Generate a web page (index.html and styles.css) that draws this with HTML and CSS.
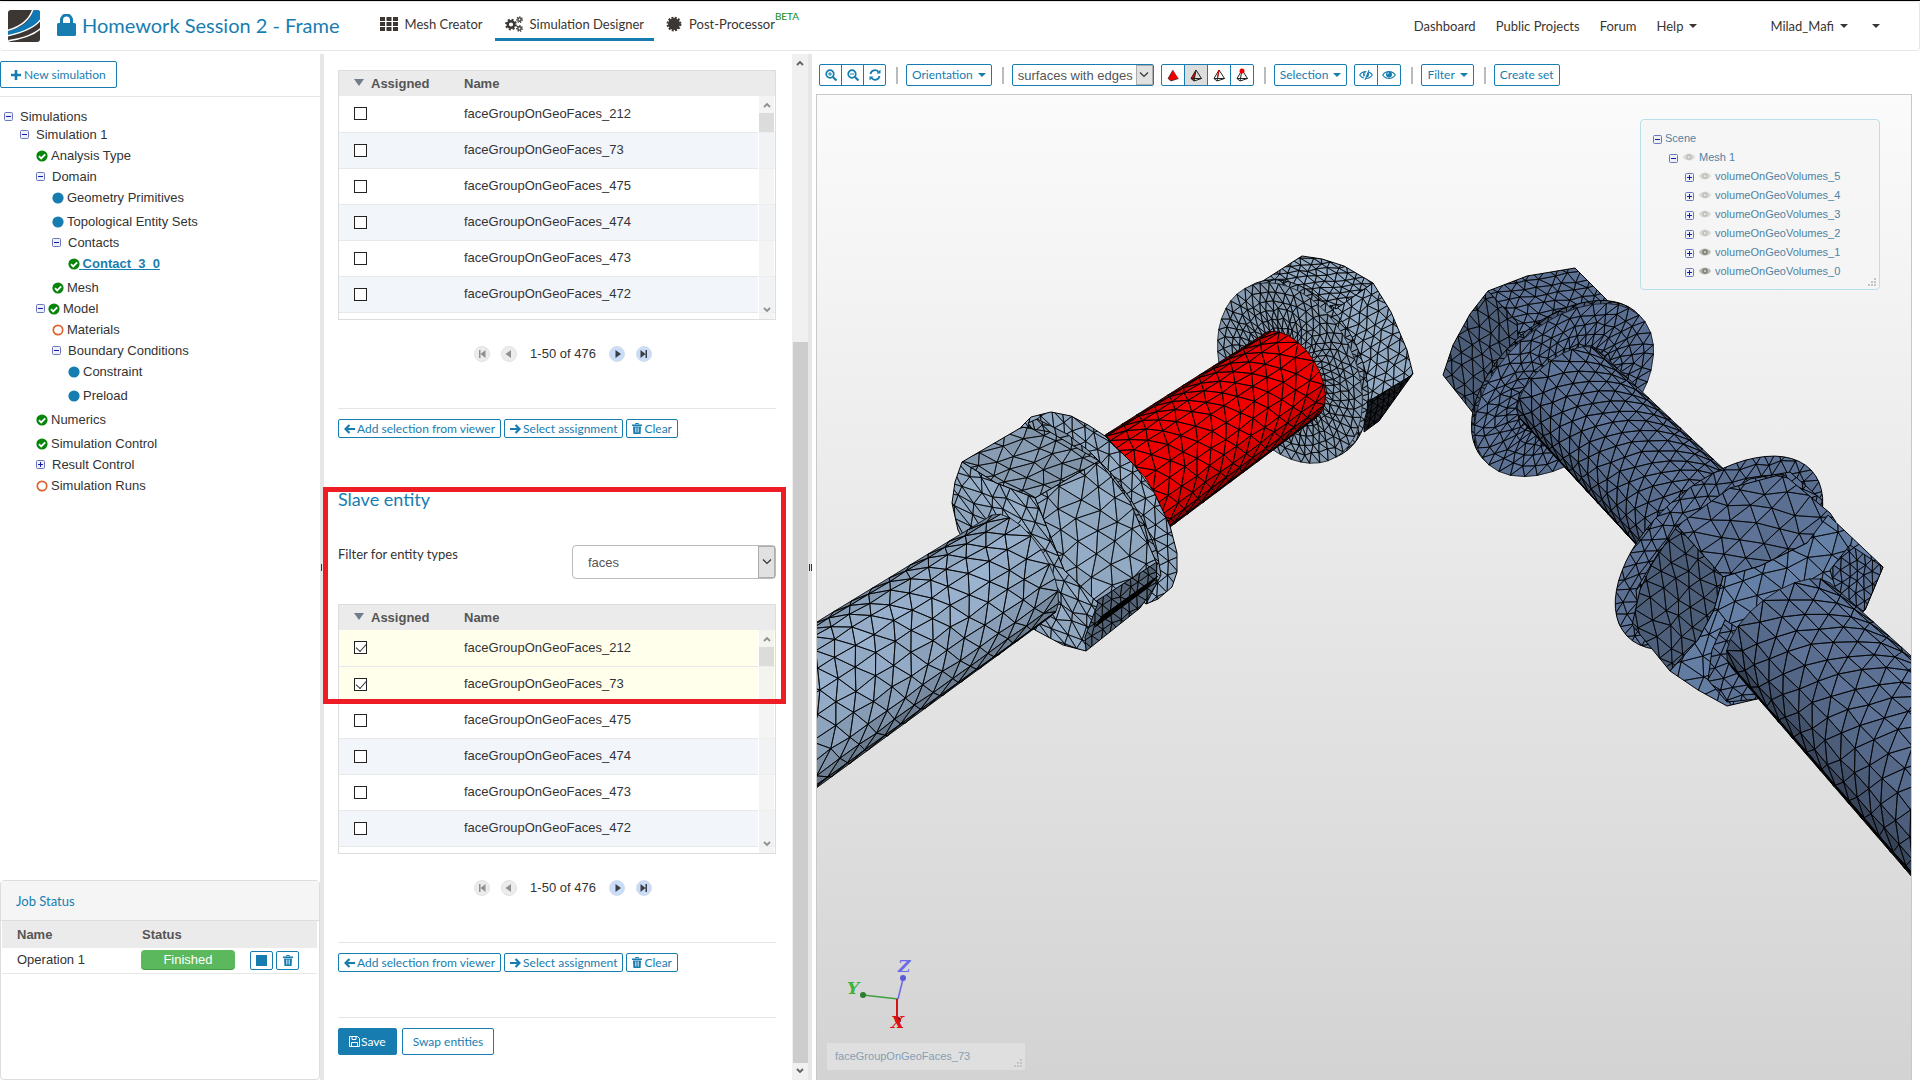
FILE: index.html
```html
<!DOCTYPE html>
<html lang="en">
<head>
<meta charset="utf-8">
<title>Homework Session 2 - Frame</title>
<link rel="stylesheet" href="styles.css">
</head>
<body>
<svg class="defs" aria-hidden="true">
  <symbol id="i-check" viewBox="0 0 12 12"><circle cx="6" cy="6" r="5.6" fill="#07850b"/><path d="M3 6.2l2.2 2.2L9.2 4.4" fill="none" stroke="#fff" stroke-width="1.8"/></symbol>
  <symbol id="i-dot" viewBox="0 0 12 12"><circle cx="6" cy="6" r="5.6" fill="#177db1"/></symbol>
  <symbol id="i-ring" viewBox="0 0 12 12"><circle cx="6" cy="6" r="4.7" fill="#fff" stroke="#e0622f" stroke-width="1.7"/></symbol>
  <symbol id="i-minus" viewBox="0 0 9 9"><rect x=".5" y=".5" width="8" height="8" rx="1" fill="#eef0f8" stroke="#6a78b8"/><path d="M2 4.5h5" stroke="#1a1ab0"/></symbol>
  <symbol id="i-plus" viewBox="0 0 9 9"><rect x=".5" y=".5" width="8" height="8" rx="1" fill="#eef0f8" stroke="#6a78b8"/><path d="M2 4.5h5M4.500 2v5" stroke="#1a1ab0"/></symbol>
  <symbol id="i-eye" viewBox="0 0 14 9"><path d="M0 4.500C3-1 11-1 14 4.500 11 10 3 10 0 4.500z" fill="currentColor" opacity=".55"/><circle cx="7" cy="4.500" r="3.300" fill="currentColor"/><circle cx="7" cy="4.500" r="1" fill="#fff"/></symbol>
  <symbol id="i-view" viewBox="0 0 14 10"><path d="M.7 5C3.500.5 10.500.5 13.300 5 10.500 9.500 3.500 9.500.7 5z" fill="none" stroke="currentColor" stroke-width="1.100"/><circle cx="7" cy="4.500" r="3" fill="currentColor"/><path d="M5.500 4.300a1.500 1.500 0 0 1 1.500-1.500" stroke="#fff" fill="none" stroke-width=".8"/></symbol>
  <symbol id="i-trash" viewBox="0 0 10 11"><path d="M3.500 1.500v-1h3v1" fill="none" stroke="currentColor"/><path d="M0 1.500h10v1.500H0zM1 3.500h8l-.4 7.500H1.400z" fill="currentColor"/><path d="M3.500 4.500v5M5 4.500v5M6.500 4.500v5" stroke="#fff" stroke-width=".6"/></symbol>
  <symbol id="i-left" viewBox="0 0 11 10"><path d="M5.500 1L1.500 5l4 4M1.800 5H11" fill="none" stroke="currentColor" stroke-width="2.200"/></symbol>
  <symbol id="i-right" viewBox="0 0 11 10"><path d="M5.500 1l4 4-4 4M9.200 5H0" fill="none" stroke="currentColor" stroke-width="2.200"/></symbol>
  <symbol id="i-first" viewBox="0 0 16 16"><circle cx="8" cy="8" r="7.500" fill="#ececec" stroke="#e2e2e2"/><path d="M5 4h1.500v8H5zM11.500 4v8l-5-4z" fill="#909090"/></symbol>
  <symbol id="i-prev" viewBox="0 0 16 16"><circle cx="8" cy="8" r="7.500" fill="#ececec" stroke="#e2e2e2"/><path d="M10 4v8L4.500 8z" fill="#909090"/></symbol>
  <symbol id="i-next" viewBox="0 0 16 16"><circle cx="8" cy="8" r="7.500" fill="#c9dcf8" stroke="#d5dde8"/><path d="M6.500 4v8L12 8z" fill="#3b3f45"/></symbol>
  <symbol id="i-last" viewBox="0 0 16 16"><circle cx="8" cy="8" r="7.500" fill="#c9dcf8" stroke="#d5dde8"/><path d="M4.500 4v8l5-4zM9.500 4H11v8H9.500z" fill="#3b3f45"/></symbol>
  <symbol id="i-up" viewBox="0 0 8 6"><path d="M1 5l3-3 3 3" fill="none" stroke="currentColor" stroke-width="1.800"/></symbol>
  <symbol id="i-down" viewBox="0 0 8 6"><path d="M1 1l3 3 3-3" fill="none" stroke="currentColor" stroke-width="1.800"/></symbol>
  <symbol id="i-grip" viewBox="0 0 8 8"><path d="M6 0h2v2H6zM3 3h2v2H3zM6 3h2v2H6zM0 6h2v2H0zM3 6h2v2H3zM6 6h2v2H6z" fill="#c4c4c4"/></symbol>
  <symbol id="i-tet" viewBox="0 0 14 14"><path d="M7 2L2 10.500 5 13l7.500-2.500zM7 2L5 13M2 10.500h10.500" fill="none" stroke="#222" stroke-width="1"/></symbol>
</svg>

<header class="top">
  <a class="logo" href="#" aria-label="Home">
    <svg width="32" height="32" viewBox="0 0 32 32"><defs><clipPath id="lg"><rect width="32" height="32" rx="3"/></clipPath></defs><g clip-path="url(#lg)"><rect width="32" height="32" fill="#3d3733"/><path d="M32 0H25Q22 16 0 21v5Q27 20 32 9z" fill="#1078b4"/><g fill="none" stroke="#fff" stroke-width="1.500"><path d="M25-1Q20 15-1 20.500M33 9Q26 20-1 26M33 18Q24 27-1 31"/></g></g></svg>
  </a>
  <h1 class="title"><svg width="19" height="22" viewBox="0 0 19 22"><path d="M4.500 10V6a5 5 0 0 1 10 0v4" fill="none" stroke="#177db1" stroke-width="3"/><rect y="9" width="19" height="13" rx="1.500" fill="#177db1"/></svg>Homework Session 2 - Frame</h1>
  <nav class="tabs">
    <a href="#"><svg width="18" height="14" viewBox="0 0 18 14" fill="#3d3733"><path d="M0 0h5v4H0zM6.500 0h5v4h-5zM13 0h5v4h-5zM0 5h5v4H0zM6.500 5h5v4h-5zM13 5h5v4h-5zM0 10h5v4H0zM6.500 10h5v4h-5zM13 10h5v4h-5z"/></svg>Mesh Creator</a>
    <a href="#" class="on"><svg width="18" height="16" viewBox="0 0 18 16" fill="none" stroke="#3d3733"><circle cx="6" cy="8.500" r="3.300" stroke-width="2.400"/><circle cx="6" cy="8.500" r="5" stroke-width="1.800" stroke-dasharray="2 1.930"/><circle cx="14.500" cy="3.600" r="1.700" stroke-width="1.400"/><circle cx="14.500" cy="3.600" r="2.800" stroke-width="1.200" stroke-dasharray="1.300 1.220"/><circle cx="14.500" cy="12.400" r="1.700" stroke-width="1.400"/><circle cx="14.500" cy="12.400" r="2.800" stroke-width="1.200" stroke-dasharray="1.300 1.220"/></svg>Simulation Designer</a>
    <a href="#"><svg width="16" height="16" viewBox="0 0 16 16"><circle cx="8" cy="8" r="6" fill="#3d3733"/><circle cx="8" cy="8" r="6.400" fill="none" stroke="#3d3733" stroke-width="2" stroke-dasharray="2 1.350"/></svg>Post-Processor<sup>BETA</sup></a>
  </nav>
  <nav class="links">
    <a href="#">Dashboard</a><a href="#">Public Projects</a><a href="#">Forum</a><a href="#">Help <i class="caret"></i></a>
    <a href="#" class="user">Milad_Mafi <i class="caret"></i></a><a href="#" aria-label="More"><i class="caret"></i></a>
  </nav>
</header>

<main class="main">
  <aside class="side">
    <div class="side-head"><button class="btn big new"><svg width="10" height="10" viewBox="0 0 10 10"><path d="M5 0v10M0 5h10" stroke="#177db1" stroke-width="2.600"/></svg>New simulation</button></div>
    <ul class="tree">
      <li class="l0 tight"><svg class="tg"><use href="#i-minus"/></svg><span>Simulations</span></li>
      <li class="l1"><svg class="tg"><use href="#i-minus"/></svg><span>Simulation 1</span></li>
      <li class="l2"><svg class="st"><use href="#i-check"/></svg><span>Analysis Type</span></li>
      <li class="l2"><svg class="tg"><use href="#i-minus"/></svg><span>Domain</span></li>
      <li class="l3"><svg class="st"><use href="#i-dot"/></svg><span>Geometry Primitives</span></li>
      <li class="l3 gap"><svg class="st"><use href="#i-dot"/></svg><span>Topological Entity Sets</span></li>
      <li class="l3"><svg class="tg"><use href="#i-minus"/></svg><span>Contacts</span></li>
      <li class="l4"><svg class="st"><use href="#i-check"/></svg><a href="#">&nbsp;Contact_3_0</a></li>
      <li class="l3 gap"><svg class="st"><use href="#i-check"/></svg><span>Mesh</span></li>
      <li class="l2"><svg class="tg near"><use href="#i-minus"/></svg><svg class="st"><use href="#i-check"/></svg><span>Model</span></li>
      <li class="l3"><svg class="st"><use href="#i-ring"/></svg><span>Materials</span></li>
      <li class="l3"><svg class="tg"><use href="#i-minus"/></svg><span>Boundary Conditions</span></li>
      <li class="l4"><svg class="st"><use href="#i-dot"/></svg><span>Constraint</span></li>
      <li class="l4 gap"><svg class="st"><use href="#i-dot"/></svg><span>Preload</span></li>
      <li class="l2 gap"><svg class="st"><use href="#i-check"/></svg><span>Numerics</span></li>
      <li class="l2 gap"><svg class="st"><use href="#i-check"/></svg><span>Simulation Control</span></li>
      <li class="l2"><svg class="tg"><use href="#i-plus"/></svg><span>Result Control</span></li>
      <li class="l2"><svg class="st"><use href="#i-ring"/></svg><span>Simulation Runs</span></li>
    </ul>
    <section class="jobs">
      <h2>Job Status</h2>
      <table>
        <thead><tr><th class="jn">Name</th><th class="js">Status</th><th></th></tr></thead>
        <tbody><tr><td>Operation 1</td><td><span class="pill">Finished</span></td><td><div class="acts"><button class="btn sm sq" aria-label="Stop"><svg width="11" height="11"><rect width="11" height="11" fill="#177db1"/></svg></button><button class="btn sm sq" aria-label="Delete"><svg width="10" height="11"><use href="#i-trash"/></svg></button></div></td></tr></tbody>
      </table>
    </section>
  </aside>
  <div class="split"><i></i></div>

  <section class="form">
    <div class="form-body">
      <div class="tbl">
        <table>
          <thead><tr><th class="ca"><i class="sort"></i>Assigned</th><th>Name</th></tr></thead>
          <tbody>
            <tr><td><input type="checkbox" id="m212"></td><td><label for="m212">faceGroupOnGeoFaces_212</label></td></tr>
            <tr><td><input type="checkbox" id="m73"></td><td><label for="m73">faceGroupOnGeoFaces_73</label></td></tr>
            <tr><td><input type="checkbox" id="m475"></td><td><label for="m475">faceGroupOnGeoFaces_475</label></td></tr>
            <tr><td><input type="checkbox" id="m474"></td><td><label for="m474">faceGroupOnGeoFaces_474</label></td></tr>
            <tr><td><input type="checkbox" id="m473"></td><td><label for="m473">faceGroupOnGeoFaces_473</label></td></tr>
            <tr><td><input type="checkbox" id="m472"></td><td><label for="m472">faceGroupOnGeoFaces_472</label></td></tr>
          </tbody>
        </table>
        <div class="sb in"><svg width="8" height="6"><use href="#i-up"/></svg><i class="thumb"></i><svg class="end" width="8" height="6"><use href="#i-down"/></svg></div>
      </div>
      <div class="pager"><button aria-label="First"><svg><use href="#i-first"/></svg></button><button aria-label="Previous"><svg><use href="#i-prev"/></svg></button><span>1-50 of 476</span><button aria-label="Next"><svg><use href="#i-next"/></svg></button><button aria-label="Last"><svg><use href="#i-last"/></svg></button></div>
      <div class="row ruled"><button class="btn sm"><svg width="11" height="10"><use href="#i-left"/></svg>Add selection from viewer</button><button class="btn sm"><svg width="11" height="10"><use href="#i-right"/></svg>Select assignment</button><button class="btn sm"><svg width="10" height="11"><use href="#i-trash"/></svg>Clear</button></div>

      <div class="slave">
        <h2>Slave entity</h2>
        <div class="filter"><label for="etype">Filter for entity types</label><div class="sel"><select id="etype"><option>faces</option></select><span><svg width="10" height="6" viewBox="0 0 10 6"><path d="M1 .5l4 4 4-4" fill="none" stroke="#333" stroke-width="1.200"/></svg></span></div></div>
        <div class="tbl">
          <table>
            <thead><tr><th class="ca"><i class="sort"></i>Assigned</th><th>Name</th></tr></thead>
            <tbody>
              <tr class="hit"><td><input type="checkbox" id="s212" checked></td><td><label for="s212">faceGroupOnGeoFaces_212</label></td></tr>
              <tr class="hit"><td><input type="checkbox" id="s73" checked></td><td><label for="s73">faceGroupOnGeoFaces_73</label></td></tr>
              <tr><td><input type="checkbox" id="s475"></td><td><label for="s475">faceGroupOnGeoFaces_475</label></td></tr>
              <tr><td><input type="checkbox" id="s474"></td><td><label for="s474">faceGroupOnGeoFaces_474</label></td></tr>
              <tr><td><input type="checkbox" id="s473"></td><td><label for="s473">faceGroupOnGeoFaces_473</label></td></tr>
              <tr><td><input type="checkbox" id="s472"></td><td><label for="s472">faceGroupOnGeoFaces_472</label></td></tr>
            </tbody>
          </table>
          <div class="sb in"><svg width="8" height="6"><use href="#i-up"/></svg><i class="thumb"></i><svg class="end" width="8" height="6"><use href="#i-down"/></svg></div>
        </div>
        <div class="mark"></div>
      </div>
      <div class="pager"><button aria-label="First"><svg><use href="#i-first"/></svg></button><button aria-label="Previous"><svg><use href="#i-prev"/></svg></button><span>1-50 of 476</span><button aria-label="Next"><svg><use href="#i-next"/></svg></button><button aria-label="Last"><svg><use href="#i-last"/></svg></button></div>
      <div class="row ruled"><button class="btn sm"><svg width="11" height="10"><use href="#i-left"/></svg>Add selection from viewer</button><button class="btn sm"><svg width="11" height="10"><use href="#i-right"/></svg>Select assignment</button><button class="btn sm"><svg width="10" height="11"><use href="#i-trash"/></svg>Clear</button></div>
      <div class="row ruled last"><button class="btn big save"><svg width="11" height="11" viewBox="0 0 11 11" fill="none" stroke="#fff"><path d="M.5.5h8l2 2v8H.5zM3 .5v3h4v-3M2.500 10.500v-4h6v4"/></svg>Save</button><button class="btn big">Swap entities</button></div>
    </div>
    <div class="sb out"><svg width="8" height="6"><use href="#i-up"/></svg><i class="thumb"></i><svg class="end" width="8" height="6"><use href="#i-down"/></svg></div>
  </section>
  <div class="split"><i></i></div>

  <section class="viewer">
    <div class="bar">
      <div class="grp"><button class="btn" aria-label="Zoom in"><svg width="12" height="12" viewBox="0 0 12 12" fill="none" stroke="#177db1"><circle cx="5" cy="5" r="3.800" stroke-width="1.700"/><path d="M3 5h4M5 3v4"/><path d="M8 8l3.500 3.500" stroke-width="2.200"/></svg></button><button class="btn" aria-label="Zoom out"><svg width="12" height="12" viewBox="0 0 12 12" fill="none" stroke="#177db1"><circle cx="5" cy="5" r="3.800" stroke-width="1.700"/><path d="M3 5h4"/><path d="M8 8l3.500 3.500" stroke-width="2.200"/></svg></button><button class="btn" aria-label="Reset"><svg width="12" height="12" viewBox="0 0 12 12" fill="none" stroke="#177db1" stroke-width="1.800"><path d="M1.500 5A4.500 4.500 0 0 1 9.500 3M10.500 7A4.500 4.500 0 0 1 2.500 9"/><path d="M11.500.5v4h-4zM.5 11.500v-4h4z" fill="#177db1" stroke="none"/></svg></button></div>
      <i class="sep"></i><button class="btn dd">Orientation<i class="caret"></i></button>
      <i class="sep"></i><div class="sel mini"><select aria-label="Render mode"><option>surfaces with edges</option></select><span><svg width="10" height="6" viewBox="0 0 10 6"><path d="M1 .5l4 4 4-4" fill="none" stroke="#333" stroke-width="1.200"/></svg></span></div>
      <div class="grp tets"><button class="btn" aria-label="Volumes"><svg width="14" height="14"><path d="M7 2L2 10.500 5 13l7.500-2.500z" fill="#e00"/><path d="M7 2L2 10.500 5 13l7.500-2.500" fill="none" stroke="#222" stroke-width=".7"/></svg></button><button class="btn act" aria-label="Faces"><svg width="14" height="14"><path d="M7 2L5 13l-3-2.500z" fill="#e00"/><use href="#i-tet"/></svg></button><button class="btn" aria-label="Edges"><svg width="14" height="14"><use href="#i-tet"/><path d="M7 2L5.500 10" stroke="#e00"/></svg></button><button class="btn" aria-label="Nodes"><svg width="14" height="14"><use href="#i-tet"/><circle cx="7" cy="3" r="2.500" fill="#e00"/></svg></button></div>
      <i class="sep"></i><button class="btn dd">Selection<i class="caret"></i></button>
      <div class="grp eyes"><button class="btn" aria-label="Hide"><svg width="14" height="10"><use href="#i-view"/><path d="M9 0L5 10" stroke="#fff" stroke-width="2"/><path d="M10 0L6 10" stroke="#177db1"/></svg></button><button class="btn" aria-label="Show"><svg width="14" height="10"><use href="#i-view"/></svg></button></div>
      <i class="sep"></i><button class="btn dd">Filter<i class="caret"></i></button>
      <i class="sep"></i><button class="btn">Create set</button>
    </div>
    <div class="canvas">
      <svg id="scene" viewBox="817 95 1094 985" preserveAspectRatio="xMinYMin slice" role="img" aria-label="Meshed bolts"></svg>
      <div class="scene-tree">
        <ul>
          <li class="s0"><svg class="tg"><use href="#i-minus"/></svg>Scene</li>
          <li class="s1"><svg class="tg"><use href="#i-minus"/></svg><svg class="eye"><use href="#i-eye"/></svg>Mesh 1</li>
          <li class="s2"><svg class="tg"><use href="#i-plus"/></svg><svg class="eye"><use href="#i-eye"/></svg>volumeOnGeoVolumes_5</li>
          <li class="s2"><svg class="tg"><use href="#i-plus"/></svg><svg class="eye"><use href="#i-eye"/></svg>volumeOnGeoVolumes_4</li>
          <li class="s2"><svg class="tg"><use href="#i-plus"/></svg><svg class="eye"><use href="#i-eye"/></svg>volumeOnGeoVolumes_3</li>
          <li class="s2"><svg class="tg"><use href="#i-plus"/></svg><svg class="eye"><use href="#i-eye"/></svg>volumeOnGeoVolumes_2</li>
          <li class="s2"><svg class="tg"><use href="#i-plus"/></svg><svg class="eye vis"><use href="#i-eye"/></svg>volumeOnGeoVolumes_1</li>
          <li class="s2"><svg class="tg"><use href="#i-plus"/></svg><svg class="eye vis"><use href="#i-eye"/></svg>volumeOnGeoVolumes_0</li>
        </ul>
        <svg class="grip" width="8" height="8"><use href="#i-grip"/></svg>
      </div>
      <div class="hint">faceGroupOnGeoFaces_73<svg class="grip" width="8" height="8"><use href="#i-grip"/></svg></div>
    </div>
  </section>
</main>
<script src="scene.js"></script>
</body>
</html>
```

FILE: styles.css
```css
* { box-sizing: border-box; }
body { margin: 0; height: 100vh; display: flex; flex-direction: column; overflow: hidden; border-top: 1px solid #000; background: #fff; color: #333; font: 13px/20px "Liberation Sans", Arial, sans-serif; }
svg { display: block; flex: none; }
ul { list-style: none; margin: 0; padding: 0; }
h1, h2 { margin: 0; font-weight: 400; color: #177db1; font-family: Lato, sans-serif; }
a { color: inherit; text-decoration: none; }
.defs { position: absolute; width: 0; height: 0; }

.top { display: flex; align-items: center; height: 50px; padding: 0 39px 0 8px; border: 1px solid #e7e7e7; border-left: 0; border-radius: 4px; font-family: Lato, sans-serif; font-size: 13px; color: #3a3531; flex: none; }
.title { display: flex; align-items: center; gap: 6px; margin: 0 0 2px 17px; font-size: 20px; line-height: 24px; white-space: nowrap; }
.tabs { display: flex; gap: 2px; margin-left: 30px; height: 40px; }
.tabs a { display: flex; align-items: center; gap: 7px; padding: 2px 10px 0; border-bottom: 3px solid transparent; height: 34px; margin-top: 1px; }
.tabs a.on { border-color: #177db1; }
.tabs sup { font-size: 10px; line-height: 10px; color: #118a1b; margin: -15px 0 0 -7px; }
.links { display: flex; align-items: center; gap: 20px; margin: 0 0 1px auto; }
.links a { display: flex; align-items: center; gap: 6px; }
.links .user { margin: 0 4px 0 53px; }
.caret { display: block; border: 4px solid transparent; border-top-color: currentColor; border-bottom: 0; }

.main { display: flex; flex: 1; min-height: 0; padding-top: 3px; }
.split { flex: none; width: 4px; background: #e6e6e6; display: flex; align-items: center; justify-content: center; }
.split i { width: 3px; height: 7px; border: solid #333; border-width: 0 1px; }

.btn { display: inline-flex; align-items: center; justify-content: center; gap: 3px; height: 22px; padding: 0 5px; border: 1px solid #177db1; border-radius: 2px; background: #fff; color: #177db1; font: 12px/16px Lato, sans-serif; white-space: nowrap; }
.btn.big { height: 27px; padding: 0 10px; }
.btn.big.save { gap: 1px; }
.btn.sm { height: 19px; padding: 0 5px; gap: 2px; }
.save { background: #177db1; color: #fff; }

.side { width: 320px; flex: none; display: flex; flex-direction: column; }
.side-head { height: 43px; padding-top: 7px; border-bottom: 1px solid #e5e5e5; }
.tree { padding-top: 12px; flex: 1; }
.tree li { display: flex; align-items: center; height: 21px; }
.tree li.tight { height: 15px; }
.tree li.gap { margin-top: 3px; }
.tree a { color: #177db1; font-weight: 700; text-decoration: underline; margin-left: -4px; }
.tg { width: 9px; height: 9px; margin-right: 7px; }
.tg.near { margin-right: 3px; }
.st { width: 12px; height: 12px; margin-right: 3px; }
.l0 { padding-left: 4px; }
.l1 { padding-left: 20px; }
.l2 { padding-left: 36px; }
.l3 { padding-left: 52px; }
.l4 { padding-left: 68px; }

.jobs { height: 200px; border: 1px solid #ddd; border-radius: 4px; }
.jobs h2 { height: 40px; padding: 0 15px; line-height: 40px; font-size: 13px; background: #f5f5f5; border-bottom: 1px solid #ddd; }
.jobs table { width: 315px; border-collapse: collapse; table-layout: fixed; margin-left: 1px; }
.jobs th { height: 27px; background: #ebebeb; color: #555; text-align: left; padding: 0 0 0 15px; }
.jobs .jn { width: 124px; }
.jobs .js { width: 109px; }
.jobs td { height: 25px; padding: 0 0 0 15px; border-bottom: 1px solid #e8e8e8; }
.jobs th:nth-child(2) { padding-left: 16px; }
.pill { display: block; width: 94px; height: 20px; line-height: 19px; border-radius: 4px; background: #5cb85c; border-bottom: 1px solid #449d44; color: #fff; text-align: center; }
.acts { display: flex; gap: 3px; }
.sq { width: 23px; }

.form { width: 484px; flex: none; display: flex; }
.form-body { flex: 1; padding: 16px 16px 0 14px; }
.tbl { position: relative; height: 250px; border: 1px solid #ddd; overflow: hidden; }
.tbl table { width: 100%; border-collapse: collapse; table-layout: fixed; }
.tbl th { height: 25px; padding: 0; background: #ebebeb; color: #555; text-align: left; font-size: 13px; }
.tbl .ca { width: 125px; }
.sort { display: inline-block; border: 5px solid transparent; border-top: 7px solid #717d8a; border-bottom: 0; margin: 0 7px 2px 15px; }
.tbl td { height: 36px; padding: 0; border-bottom: 1px solid #e6e8ea; }
.tbl tbody tr:nth-child(even) { background: #f2f6fb; }
.tbl tbody tr.hit { background: #ffffec; }
input[type=checkbox] { display: block; appearance: none; width: 13px; height: 13px; margin: 0 0 0 15px; border: 1px solid #222; background: #fff; }
input:checked::after { content: ""; display: block; width: 10px; height: 5px; margin: 1px 0 0 1px; border: solid #333; border-width: 0 0 1px 1px; transform: rotate(-48deg); }
.sb { display: flex; flex-direction: column; align-items: center; color: #606060; background: #f0f0f0; }
.sb .end { margin-top: auto; }
.sb.in { position: absolute; right: 1px; top: 25px; bottom: 0; width: 16px; padding: 6px 0; color: #909090; background: rgba(240, 240, 240, .75); border-left: 1px solid #fff; }
.sb.in .thumb { width: 15px; height: 19px; margin-top: 5px; background: rgba(200, 200, 200, .55); }
.sb.out { width: 16px; padding: 6px 0; }
.sb.out .thumb { width: 15px; flex: 1; margin: 276px 0 5px; background: #cdcdcd; }
.pager { display: flex; align-items: center; justify-content: center; gap: 11px; height: 16px; margin: 26px 0 46px 12px; }
.pager span { margin: 0 2px; }
.pager button { border: 0; padding: 0; background: none; }
.pager svg { width: 16px; height: 16px; }
.row { display: flex; gap: 3px; }
.ruled { border-top: 1px solid #e5e5e5; padding-top: 10px; }
.last { margin-top: 45px; gap: 5px; }
.slave { position: relative; margin-top: 50px; }
.slave h2 { font-size: 18px; line-height: 22px; }
.filter { display: flex; justify-content: space-between; margin: 35px 0 25px; font: 13px/18px Lato, sans-serif; }
.sel { position: relative; width: 204px; height: 34px; }
.sel select { appearance: none; width: 100%; height: 100%; border: 1px solid #bbb; border-radius: 4px; background: #fff; padding: 0 15px; color: #555; font: 13px "Liberation Sans", Arial, sans-serif; }
.sel span { position: absolute; top: 1px; right: 1px; bottom: 1px; width: 17px; display: flex; align-items: center; justify-content: center; background: #e1e1e1; border: 1px solid #adadad; pointer-events: none; }
.mark { position: absolute; left: -15px; right: -10px; top: -1px; height: 217px; border: 5px solid #ee1c24; pointer-events: none; }

.viewer { flex: 1; min-width: 0; display: flex; flex-direction: column; padding: 10px 8px 0 4px; }
.bar { display: flex; align-items: center; padding-left: 3px; height: 22px; margin-bottom: 8px; flex: none; }
.grp { display: flex; }
.grp .btn { width: 23px; padding: 0; margin-right: -1px; border-radius: 0; }
.grp .btn:first-child { border-radius: 2px 0 0 2px; }
.grp .btn:last-child { border-radius: 0 2px 2px 0; margin: 0; }
.grp.tets, .grp.eyes { margin-left: 7px; }
.grp.tets .btn, .grp.eyes .btn { width: 24px; }
.btn.act { background: #ddd; }
.dd { gap: 5px; }
.sep { width: 2px; height: 17px; margin: 0 8px 0 10px; background: #bbb; }
.mini { width: 142px; height: 22px; }
.mini select { border-color: #177db1; border-radius: 2px; padding: 0 5px; }
.canvas { position: relative; flex: 1; min-height: 0; border: 1px solid #c8c8c8; border-bottom: 0; background: linear-gradient(#fbfbfb, #d3d3d3); overflow: hidden; }
#scene { width: 100%; height: 100%; }
.axes { font: italic 700 17px "DejaVu Serif", serif; }
.scene-tree { position: absolute; top: 24px; right: 31px; width: 240px; padding: 8px 12px; border: 1px solid #b8dfea; border-radius: 4px; background: rgba(245, 245, 245, .9); color: #4f83a2; font-size: 11px; height: 171px; }
.scene-tree li { display: flex; align-items: center; height: 19px; }
.scene-tree .tg { margin: 3px 3px 0 0; }
.s1 { padding-left: 16px; }
.s2 { padding-left: 32px; }
.eye { width: 12px; height: 8px; margin: 0 4px 0 2px; color: #c3c1bb; }
.eye.vis { color: #85857a; }
.grip { position: absolute; right: 3px; bottom: 3px; }
.hint { position: absolute; left: 10px; bottom: 10px; width: 198px; height: 27px; padding-left: 8px; line-height: 27px; background: rgba(225, 225, 225, .8); color: #85a0b4; font-size: 11px; }
```

FILE: scene.js
```js
// Draws the two meshed bolts and the orientation axes.
(function () {
  var seed = 7, out = [], clips = 0;
  function rnd() { seed = (seed * 16807) % 2147483647; return seed / 2147483647 - 0.5; }
  function shade(c, k) {
    return 'rgb(' + c.map(function (v) { return Math.max(0, Math.min(255, Math.round(v * k))); }).join() + ')';
  }
  function pt(p) { return p[0].toFixed(1) + ' ' + p[1].toFixed(1); }

  // Triangulates a grid of points whose odd rows are shifted half a cell;
  // tone(i, j) gives the brightness of a cell.
  function mesh(g, color, tone, line) {
    var edges = '';
    for (var i = 0; i < g.length - 1; i++) {
      for (var j = 0; j < g[i].length - 1; j++) {
        var a = g[i][j], b = g[i + 1][j], c = g[i + 1][j + 1], d = g[i][j + 1];
        var tris = g[i].odd ? [[a, b, c], [a, c, d]] : [[a, b, d], [b, c, d]];
        tris.forEach(function (t) {
          var f = shade(color, tone(i, j) + rnd() * 0.07);
          out.push('<path fill="' + f + '" stroke="' + f + '" stroke-width=".6" d="M' + t.map(pt).join('L') + 'z"/>');
          edges += 'M' + t.map(pt).join('L') + 'z';
        });
      }
    }
    out.push('<path fill="none" stroke="#000" stroke-linejoin="round" stroke-width="' + (line || 0.7) + '" d="' + edges + '"/>');
  }

  // Half-visible cylinder between two rims: t/b are the silhouette points, v the rim bulge.
  function cylinder(t0, b0, v0, t1, b1, v1, n, m, color, light) {
    var g = [];
    for (var i = 0; i <= m; i++) {
      g[i] = [];
      g[i].odd = i % 2 === 1;
      for (var j = 0; j <= n; j++) {
        var inner = j && j < n;
        var s = (j + (inner ? (g[i].odd ? 0.25 : -0.25) + rnd() * 0.16 : 0)) / n;
        var th = Math.PI * (i + (i && i < m ? rnd() * 0.16 : 0)) / m, k = (1 - Math.cos(th)) / 2, q = Math.sin(th);
        g[i][j] = [0, 1].map(function (x) {
          var p = t0[x] + (b0[x] - t0[x]) * k + v0[x] * q;
          var r = t1[x] + (b1[x] - t1[x]) * k + v1[x] * q;
          return p + (r - p) * s;
        });
      }
    }
    mesh(g, color, function (i) { return light[Math.min(light.length - 1, Math.floor((i + 0.5) / m * light.length))]; }, 0.8);
  }

  // Flat elliptical face meshed in rings.
  function disc(c, u, v, r0, rings, n, color) {
    var g = [];
    for (var i = 0; i <= rings; i++) {
      g[i] = [];
      g[i].odd = i % 2 === 1;
      for (var j = 0; j <= n; j++) {
        if (j === n) { g[i].push(g[i][0]); continue; }
        var r = r0 + (1 - r0) * (i + (i && i < rings ? rnd() * 0.4 : 0)) / rings;
        var a = 2 * Math.PI * (j + (g[i].odd ? 0.5 : 0) + rnd() * 0.3) / n;
        g[i].push([c[0] + r * (u[0] * Math.cos(a) + v[0] * Math.sin(a)), c[1] + r * (u[1] * Math.cos(a) + v[1] * Math.sin(a))]);
      }
    }
    mesh(g, color, function () { return 1; });
  }

  // Polygonal face filled with a jittered triangular lattice of cell vectors a, b.
  function face(poly, color, a, b, line) {
    var xs = poly.map(function (p) { return p[0]; }), ys = poly.map(function (p) { return p[1]; });
    var cx = (Math.min.apply(0, xs) + Math.max.apply(0, xs)) / 2, cy = (Math.min.apply(0, ys) + Math.max.apply(0, ys)) / 2;
    var w = (Math.max.apply(0, xs) - Math.min.apply(0, xs)) / 2 + 20, h = (Math.max.apply(0, ys) - Math.min.apply(0, ys)) / 2 + 20;
    var det = Math.abs(a[0] * b[1] - a[1] * b[0]);
    var ni = Math.ceil((w * Math.abs(b[1]) + h * Math.abs(b[0])) / det), nj = Math.ceil((w * Math.abs(a[1]) + h * Math.abs(a[0])) / det);
    var g = [], id = 'f' + (clips++), d = 'M' + poly.map(pt).join('L') + 'z';
    for (var j = -nj; j <= nj; j++) {
      var row = [];
      row.odd = Math.abs(j % 2) === 1;
      for (var i = -ni; i <= ni; i++) {
        var x = i + (row.odd ? 0.5 : 0) + rnd() * 0.36, y = j + rnd() * 0.36;
        row.push([cx + a[0] * x + b[0] * y, cy + a[1] * x + b[1] * y]);
      }
      g.push(row);
    }
    out.push('<clipPath id="' + id + '"><path d="' + d + '"/></clipPath><g clip-path="url(#' + id + ')">');
    mesh(g, color, function () { return 1; }, line);
    out.push('</g><path fill="none" stroke="#000" d="' + d + '"/>');
  }

  function ellipse(c, u, v) {
    var p = [];
    for (var i = 0; i < 60; i++) {
      var a = Math.PI * i / 30;
      p.push([c[0] + u[0] * Math.cos(a) + v[0] * Math.sin(a), c[1] + u[1] * Math.cos(a) + v[1] * Math.sin(a)]);
    }
    return p;
  }

  var steel = [144, 167, 192], pale = [132, 152, 174], bright = [150, 174, 202];
  var red = [240, 0, 0], navy = [92, 113, 148], dark = [76, 93, 120], glow = [100, 126, 164];

  // Light bolt: head
  face([[1255, 286], [1302, 256], [1322, 259], [1344, 266], [1373, 283], [1336, 309], [1300, 300]], steel, [10, -1], [3, 6]);
  face([[1330, 305], [1336, 309], [1373, 283], [1391, 312], [1407, 350], [1413, 374], [1364, 412], [1350, 340]], steel, [10, -6], [3, 9]);
  face([[1364, 404], [1412, 375], [1379, 421], [1364, 432]], [28, 32, 38], [6, -5], [2, 5]);
  face(ellipse([1296, 370], [46, 84], [56, -33]), pale, [8, -4], [3, 7]);
  disc([1290, 373], [46, 84], [56, -33], 0.4, 6, 46, pale);
  // Light bolt: highlighted shank
  cylinder([1080, 451], [1150, 542], [30, -19], [1264, 334], [1316, 418], [24, -15], 12, 12, red, [0.6, 0.85, 0.95, 1, 1, 1, 1, 0.98, 0.9, 0.8, 0.6, 0.45]);
  // Light bolt: nut
  face([[1021, 427], [1031, 417], [1051, 412], [1071, 416], [1088, 425], [1105, 436], [1134, 465], [1154, 492], [1170, 526], [1177, 553], [1177, 572], [1172, 587], [1158, 599], [1146, 604], [1120, 580], [1040, 440]], steel, [11, -6], [6, 12]);
  face([[1028, 423], [1037, 419], [1067, 434], [1089, 451], [1111, 473], [1130, 498], [1146, 526], [1157, 552], [1161, 575], [1146, 604], [1120, 580], [1040, 440]], pale, [11, -3], [8, 12]);
  face([[962, 462], [1022, 427], [1050, 432], [1099, 461], [1035, 498], [996, 483]], pale, [20, -6], [5, 11]);
  face([[1035, 498], [1099, 461], [1130, 502], [1157, 564], [1098, 603], [1064, 570]], steel, [18, -11], [8, 17]);
  face([[1095, 602], [1157, 562], [1156, 585], [1140, 608], [1086, 651], [1084, 637]], [84, 100, 118], [9, -6], [4, 9]);
  face([[1102, 616], [1158, 576], [1146, 589], [1095, 627]], [4, 4, 4], [9, -6], [4, 9]);
  face([[962, 462], [996, 483], [1035, 498], [1064, 570], [1098, 603], [1085, 637], [1086, 651], [1063, 645], [1035, 630], [990, 590], [958, 530], [952, 503], [955, 482]], steel, [15, 5], [4, 14]);
  cylinder([740, 669], [808, 794], [26, -17], [992, 515], [1050, 617], [24, -10], 13, 11, bright, [0.75, 0.9, 0.97, 1, 1, 1, 0.98, 0.95, 0.9, 0.82, 0.7, 0.5]);

  // Dark bolt: head
  face([[1488, 291], [1527, 276], [1575, 268], [1610, 303], [1590, 335], [1520, 370], [1517, 322]], navy, [13, -2], [3, 8]);
  face([[1443, 375], [1453, 345], [1470, 314], [1488, 291], [1517, 322], [1520, 370], [1477, 418]], dark, [11, 9], [-4, 11]);
  face(ellipse([1561, 387], [78, -72], [44, 48]), dark, [9, 3], [-4, 8]);
  disc([1564, 390], [78, -72], [44, 48], 0.4, 5, 38, navy);
  cylinder([1598, 350], [1522, 421], [-20, -16], [1770, 513], [1680, 592], [-30, -24], 16, 12, navy, [0.85, 1, 1.02, 1, 1, 1, 0.98, 0.95, 0.9, 0.8, 0.65, 0.3]);
  // Dark bolt: nut
  face(ellipse([1719, 553], [92, -83], [48, 50]), navy, [14, -2], [-2, 12]);
  face([[1640, 628], [1636, 590], [1660, 550], [1700, 510], [1750, 479], [1790, 472], [1822, 500], [1822, 540], [1700, 640]], navy, [15, 5], [-7, 13]);
  face([[1677, 526], [1730, 488], [1783, 474], [1830, 513], [1836, 522], [1807, 543], [1760, 566], [1723, 577]], navy, [23, 3], [-4, 17]);
  face([[1677, 526], [1723, 577], [1714, 610], [1698, 640], [1670, 671], [1648, 644], [1632, 625], [1640, 590], [1652, 564]], dark, [15, 9], [-5, 14]);
  face([[1723, 577], [1760, 566], [1807, 543], [1828, 515], [1883, 567], [1865, 610], [1810, 660], [1757, 699], [1727, 706], [1698, 690], [1670, 671], [1698, 640], [1714, 610]], glow, [22, -7], [6, 18]);
  face([[1830, 570], [1850, 545], [1883, 567], [1865, 610], [1845, 620]], navy, [8, -6], [4, 9]);
  face([[1712, 650], [1725, 620], [1757, 640], [1780, 690], [1757, 699], [1727, 702], [1708, 680]], navy, [15, -3], [2, 11]);
  cylinder([1830, 583], [1732, 668], [-24, -20], [2060, 790], [1944, 914], [-30, -30], 15, 11, navy, [0.9, 1.02, 1.04, 1.02, 1, 1, 0.98, 0.92, 0.84, 0.74, 0.6, 0.12]);

  // Orientation axes
  out.push('<g fill="none" stroke-width="1.5"><path stroke="#6a6ae8" d="M898 999L903 979"/><path stroke="#3f9e3f" d="M898 999L863 995"/><path stroke="#d01515" stroke-width="2" d="M897 999V1018"/></g>' +
    '<circle cx="903" cy="978" r="3" fill="#5a5ad8"/><circle cx="863" cy="995" r="3" fill="#2e7d2e"/><circle cx="898" cy="1020" r="3" fill="#8a1010"/>' +
    '<g class="axes"><text x="898" y="972" fill="#6a6ae8">Z</text><text x="847" y="994" fill="#3cb43c">Y</text><text x="891" y="1028" fill="#e01010">X</text></g>');

  document.getElementById('scene').innerHTML = out.join('');
})();
```
